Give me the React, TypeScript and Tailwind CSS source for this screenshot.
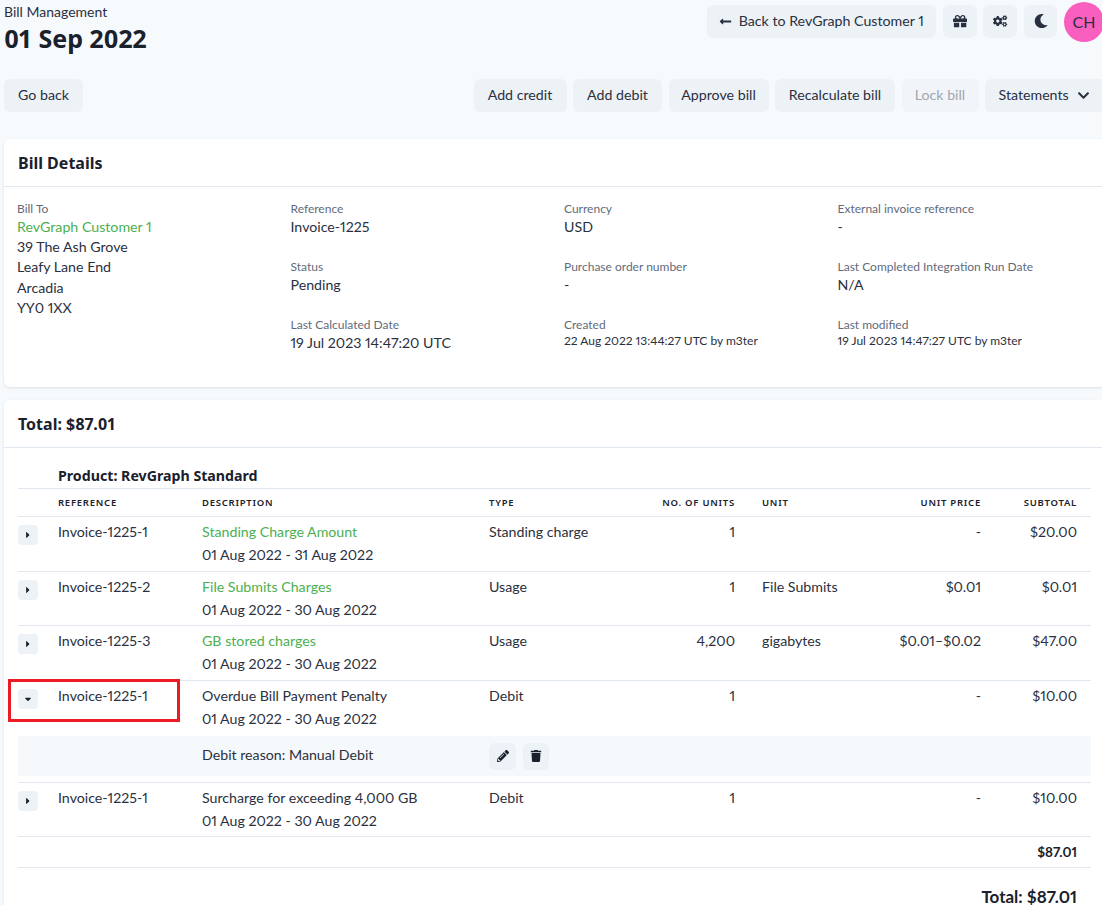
import React from "react";
import {
  FaCaretDown,
  FaCaretRight,
  FaChevronDown,
  FaCogs,
  FaGift,
  FaLongArrowAltLeft,
  FaMoon,
  FaPencilAlt,
  FaTrash,
} from "react-icons/fa";

const BODY_FONT = "font-['Lato','Noto_Sans',sans-serif]";
const HEAD_FONT = "font-['Noto_Sans',sans-serif]";

const btn =
  "h-[33px] pb-[1px] rounded-md bg-[#edf2f7] text-[14.2px] text-[#2a3040] flex items-center justify-center shrink-0";

interface Line {
  ref: string;
  desc: string;
  green?: boolean;
  dates: string;
  type: string;
  units: string;
  unit?: string;
  price: string;
  subtotal: string;
  rowClass: string;
  open?: boolean;
}

const LINES: Line[] = [
  { ref: "Invoice-1225-1", desc: "Standing Charge Amount", green: true, dates: "01 Aug 2022 - 31 Aug 2022", type: "Standing charge", units: "1", price: "-", subtotal: "$20.00", rowClass: "h-[55px]" },
  { ref: "Invoice-1225-2", desc: "File Submits Charges", green: true, dates: "01 Aug 2022 - 30 Aug 2022", type: "Usage", units: "1", unit: "File Submits", price: "$0.01", subtotal: "$0.01", rowClass: "h-[54px]" },
  { ref: "Invoice-1225-3", desc: "GB stored charges", green: true, dates: "01 Aug 2022 - 30 Aug 2022", type: "Usage", units: "4,200", unit: "gigabytes", price: "$0.01–$0.02", subtotal: "$47.00", rowClass: "h-[55px]" },
  { ref: "Invoice-1225-1", desc: "Overdue Bill Payment Penalty", dates: "01 Aug 2022 - 30 Aug 2022", type: "Debit", units: "1", price: "-", subtotal: "$10.00", rowClass: "h-[56px]", open: true },
  { ref: "Invoice-1225-1", desc: "Surcharge for exceeding 4,000 GB", dates: "01 Aug 2022 - 30 Aug 2022", type: "Debit", units: "1", price: "-", subtotal: "$10.00", rowClass: "h-[54px]" },
];

const Field: React.FC<{ label: string; value: string; small?: boolean }> = ({ label, value, small }) => (
  <div className="h-[58px]">
    <div className="text-[12px] leading-[17px] text-[#5f6b7c]">{label}</div>
    <div className={small ? "text-[12px] leading-[16px]" : "text-[14.2px] leading-[20px]"}>{value}</div>
  </div>
);

const LineRow: React.FC<{ line: Line }> = ({ line }) => (
  <>
    <tr className={`${line.rowClass} align-top ${line.open ? "" : "border-b border-[#e2e8f0]"}`}>
      <td className="pt-[8px]">
        <div className="w-5 h-5 rounded bg-[#edf2f7] flex items-center justify-center text-[10px] text-[#1a202c]">
          {line.open ? <FaCaretDown /> : <FaCaretRight />}
        </div>
      </td>
      <td className="pl-3 pt-[4px] leading-[22px]">{line.ref}</td>
      <td className="pl-3 pt-[4px]">
        <div className={line.green ? "leading-[22px] text-[#4caf50]" : "leading-[22px]"}>{line.desc}</div>
        <div className="leading-[22px] mt-[1px]">{line.dates}</div>
      </td>
      <td className="pl-3 pt-[4px] leading-[22px]">{line.type}</td>
      <td className="pr-3 pt-[4px] leading-[22px] text-right">{line.units}</td>
      <td className="pl-[15px] pt-[4px] leading-[22px]">{line.unit}</td>
      <td className="pr-3 pt-[4px] leading-[22px] text-right">{line.price}</td>
      <td className="pr-[14px] pt-[4px] leading-[22px] text-right">{line.subtotal}</td>
    </tr>
    {line.open && (
      <>
        <tr className="h-[40px] bg-[#f5f9fc]">
          <td />
          <td />
          <td className="pl-3 pb-[2px]">Debit reason: Manual Debit</td>
          <td colSpan={5} className="pl-3">
            <div className="flex gap-[7px] text-[12px] text-[#1a202c]">
              <div className="w-[27px] h-[27px] rounded-md bg-[#edf2f7] flex items-center justify-center"><FaPencilAlt /></div>
              <div className="w-[26px] h-[27px] rounded-md bg-[#edf2f7] flex items-center justify-center"><FaTrash /></div>
            </div>
          </td>
        </tr>
        <tr className="h-[6px] border-b border-[#e2e8f0]"><td colSpan={8} /></tr>
      </>
    )}
  </>
);

const TH = "font-['Noto_Sans',sans-serif] pt-[3px] text-[9.5px] font-semibold tracking-[0.08em] text-[#1a202c]";

export default function App() {
  return (
    <div className={`${BODY_FONT} proportional-nums relative h-[905px] overflow-hidden bg-[#f7fafd] text-[14.2px] text-[#2a3040]`}>
      <div className="w-[1101px] ml-1">
        {/* Header */}
        <div className="flex justify-between h-[79px]">
          <div>
            <div className="text-[14px] leading-[17px] mt-[3px]">Bill Management</div>
            <div className={`${HEAD_FONT} text-[25px] font-bold leading-[36px] text-[#1a202c]`}>01 Sep 2022</div>
          </div>
          <div className="flex gap-[6.8px] items-start pt-[2px] pr-[1px]">
            <div className={`${btn} mt-[3px] w-[229px] gap-[7px]`}>
              <FaLongArrowAltLeft className="text-[13px]" />
              Back to RevGraph Customer 1
            </div>
            <div className={`${btn} mt-[3px] w-[34px] text-[13px]`}><FaGift /></div>
            <div className={`${btn} mt-[3px] w-[34px] text-[13px]`}><FaCogs /></div>
            <div className={`${btn} mt-[3px] w-[33px] text-[13px]`}><FaMoon /></div>
            <div className="w-10 h-10 rounded-full bg-[#f95fbe] flex items-center justify-center text-[16px]">CH</div>
          </div>
        </div>

        {/* Actions */}
        <div className="flex justify-between">
          <div className={`${btn} w-[79px]`}>Go back</div>
          <div className="flex gap-[6.5px]">
            <div className={`${btn} w-[93px]`}>Add credit</div>
            <div className={`${btn} w-[89px]`}>Add debit</div>
            <div className={`${btn} w-[100px]`}>Approve bill</div>
            <div className={`${btn} w-[120px]`}>Recalculate bill</div>
            <div className={`${btn} w-[77px] !bg-[#f1f5f9] !text-[#a0a6ae]`}>Lock bill</div>
            <div className={`${btn} w-[120px] justify-start pl-[13.5px] gap-[8px]`}>
              Statements
              <FaChevronDown className="text-[13px] mt-[1px]" />
            </div>
          </div>
        </div>

        {/* Bill details */}
        <div className="mt-[27px] h-[248px] rounded-md bg-white shadow-[0_1px_3px_rgba(0,0,0,0.1)]">
          <div className={`${HEAD_FONT} h-[48px] flex items-center px-[14px] text-[16px] font-bold border-b border-[#e2e8f0] text-[#1a202c]`}>
            Bill Details
          </div>
          <div className="grid grid-cols-4 w-[1094px] ml-[13px] pt-[13px]">
            <div>
              <div className="text-[12px] leading-[17px] text-[#5f6b7c]">Bill To</div>
              <div className="text-[#4caf50] leading-[20px]">RevGraph Customer 1</div>
              <div className="leading-[20.4px]">39 The Ash Grove</div>
              <div className="leading-[20.4px]">Leafy Lane End</div>
              <div className="leading-[20.4px]">Arcadia</div>
              <div className="leading-[20.4px]">YY0 1XX</div>
            </div>
            <div>
              <Field label="Reference" value="Invoice-1225" />
              <Field label="Status" value="Pending" />
              <Field label="Last Calculated Date" value="19 Jul 2023 14:47:20 UTC" />
            </div>
            <div>
              <Field label="Currency" value="USD" />
              <Field label="Purchase order number" value="-" />
              <Field label="Created" value="22 Aug 2022 13:44:27 UTC by m3ter" small />
            </div>
            <div>
              <Field label="External invoice reference" value="-" />
              <Field label="Last Completed Integration Run Date" value="N/A" />
              <Field label="Last modified" value="19 Jul 2023 14:47:27 UTC by m3ter" small />
            </div>
          </div>
        </div>

        {/* Totals and line items */}
        <div className="mt-[13px] rounded-md bg-white shadow-[0_1px_3px_rgba(0,0,0,0.1)] pb-4">
          <div className={`${HEAD_FONT} h-[48px] flex items-center px-[14px] text-[16px] font-bold border-b border-[#e2e8f0] text-[#1a202c]`}>
            Total: $87.01
          </div>
          <div className="px-[14px]">
            <table className="w-[1073px] table-fixed border-collapse">
              <colgroup>
                <col className="w-[28px]" />
                <col className="w-[144px]" />
                <col className="w-[287px]" />
                <col className="w-[130px]" />
                <col className="w-[140px]" />
                <col className="w-[146px]" />
                <col className="w-[100px]" />
                <col className="w-[98px]" />
              </colgroup>
              <thead>
                <tr className="h-[40px] border-b border-[#e2e8f0]">
                  <th />
                  <th colSpan={7} className={`${HEAD_FONT} pl-3 pt-[16px] text-left text-[14.2px] font-bold text-[#1a202c]`}>Product: RevGraph Standard</th>
                </tr>
                <tr className="h-[28px] border-b border-[#e2e8f0]">
                  <th />
                  <th className={`${TH} pl-3 text-left`}>REFERENCE</th>
                  <th className={`${TH} pl-3 text-left`}>DESCRIPTION</th>
                  <th className={`${TH} pl-3 text-left`}>TYPE</th>
                  <th className={`${TH} pr-3 text-right`}>NO. OF UNITS</th>
                  <th className={`${TH} pl-[15px] text-left`}>UNIT</th>
                  <th className={`${TH} pr-3 text-right`}>UNIT PRICE</th>
                  <th className={`${TH} pr-[14px] text-right`}>SUBTOTAL</th>
                </tr>
              </thead>
              <tbody>
                {LINES.map((line, i) => (
                  <LineRow key={i} line={line} />
                ))}
                <tr className="h-[31px] border-b border-[#e2e8f0]">
                  <td colSpan={8} className="pr-[14px] pt-[1px] text-right text-[13.5px] font-bold text-[#1a202c]">$87.01</td>
                </tr>
              </tbody>
            </table>
            <div className="text-right pr-[14px] mt-[21px] text-[17px] leading-[16px] font-bold w-[1073px] text-[#1a202c]">Total: $87.01</div>
          </div>
        </div>
      </div>

      {/* Annotation drawn over the screenshot */}
      <div className="absolute left-[8px] top-[679px] w-[172px] h-[43px] border-[3px] border-[#ed1c24] pointer-events-none" />
    </div>
  );
}
